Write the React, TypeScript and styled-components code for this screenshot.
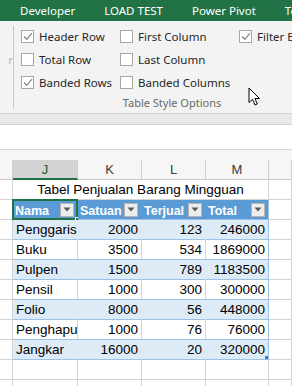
import React from "react";
import styled, { createGlobalStyle } from "styled-components";

const GlobalStyle = createGlobalStyle`
  html, body { margin: 0; padding: 0; background: #ffffff; }
  * { box-sizing: border-box; }
`;

const Page = styled.div`
  position: relative;
  width: 292px;
  height: 386px;
  overflow: hidden;
  background: #ffffff;
`;

const TabBar = styled.div`
  height: 21px;
  background: #217346;
  display: flex;
  align-items: center;
  gap: 29px;
  padding-left: 20px;
  white-space: nowrap;
`;

const Tab = styled.span`
  color: #ffffff;
  font-family: "Noto Sans", "Open Sans", sans-serif;
  font-size: 11.5px;
  line-height: 21px;
  flex: none;
`;

const Ribbon = styled.div`
  height: 93px;
  background: #f3f3f3;
  border-bottom: 1px solid #d5d5d5;
  display: flex;
  white-space: nowrap;
`;

const Stub = styled.div`
  width: 13px;
  flex: none;
  display: flex;
  justify-content: flex-end;
  padding-top: 31px;
  overflow: hidden;
  color: #b4b4b4;
  font-family: "Noto Sans", sans-serif;
  font-size: 11.5px;
`;

const Separator = styled.div`
  width: 1px;
  flex: none;
  background: #c6c6c6;
  margin: 5px 0 4px;
`;

const Group = styled.div`
  width: 316px;
  flex: none;
  display: flex;
  flex-direction: column;
  padding-top: 4px;
`;

const OptionGrid = styled.div`
  display: grid;
  grid-template-columns: 99px 119px auto;
  grid-auto-rows: 23px;
  padding-left: 7px;
`;

const Option = styled.label`
  display: flex;
  align-items: center;
  gap: 5px;
  font-family: "Noto Sans", "Open Sans", sans-serif;
  font-size: 11.5px;
  color: #262626;
`;

const Box = styled.span`
  width: 13px;
  height: 13px;
  border: 1px solid #a6a6a6;
  background: #ffffff;
  display: flex;
  align-items: center;
  justify-content: center;
  flex: none;
`;

const GroupLabel = styled.div`
  text-align: center;
  font-family: "Noto Sans", "Open Sans", sans-serif;
  font-size: 11px;
  color: #6a6a6a;
  margin-top: 1px;
`;

const NameBand = styled.div`
  height: 11px;
  background: #e9e9e9;
  border-bottom: 1px solid #d4d4d4;
`;

const FormulaBar = styled.div`
  height: 25px;
  background: #ffffff;
  border-bottom: 1px solid #d4d4d4;
`;

const HeaderGap = styled.div`
  height: 10px;
  background: #f6f6f6;
`;

const COLS = "13px 65px 64px 64px 63px 23px";

const ColHeaderRow = styled.div`
  display: grid;
  grid-template-columns: ${COLS};
  height: 20px;
  background: #f6f6f6;
`;

const ColHeader = styled.div<{ $active?: boolean }>`
  display: flex;
  align-items: center;
  justify-content: center;
  font-family: "Liberation Sans", "Open Sans", sans-serif;
  font-size: 13px;
  color: ${(p) => (p.$active ? "#1e5c38" : "#3a3a3a")};
  background: ${(p) => (p.$active ? "#d3d3d3" : "transparent")};
  border-right: 1px solid #d0d0d0;
  border-bottom: ${(p) => (p.$active ? "2px solid #217346" : "1px solid #c8c8c8")};
`;

const Row = styled.div`
  display: grid;
  grid-template-columns: ${COLS};
  height: 20px;
`;

type Band = "blue" | "white" | "none";

const Cell = styled.div<{ $band?: Band; $right?: boolean; $span?: number; $edge?: boolean }>`
  position: relative;
  grid-column: span ${(p) => p.$span ?? 1};
  display: flex;
  align-items: flex-end;
  justify-content: ${(p) => (p.$right ? "flex-end" : p.$span ? "center" : "flex-start")};
  padding: 0 3px 1px 3px;
  font-family: "Liberation Sans", "Open Sans", sans-serif;
  font-size: 13.5px;
  line-height: 17px;
  color: #000000;
  white-space: nowrap;
  overflow: hidden;
  background: ${(p) => (p.$band === "blue" ? "#ddebf7" : "#ffffff")};
  border-bottom: 1px solid ${(p) => (p.$band && p.$band !== "none" ? "#9bc2e6" : "#d4d4d4")};
  border-right: 1px solid
    ${(p) => (p.$edge ? "#9bc2e6" : p.$band === "blue" ? "#ddebf7" : "#d4d4d4")};
`;

const HeadCell = styled.div<{ $edge?: boolean }>`
  position: relative;
  display: flex;
  align-items: center;
  justify-content: space-between;
  padding: 0 3px 0 2px;
  background: #5b9bd5;
  color: #ffffff;
  font-family: "Liberation Sans", "Open Sans", sans-serif;
  font-weight: bold;
  font-size: 12.5px;
  white-space: nowrap;
  border-bottom: 1px solid #9bc2e6;
  border-right: 1px solid ${(p) => (p.$edge ? "#9bc2e6" : "#5b9bd5")};
`;

const HeadText = styled.span`
  padding-top: 2px;
`;

const Drop = styled.span`
  width: 14px;
  height: 14px;
  flex: none;
  background: #ededed;
  border: 1px solid #b5b5b5;
  display: flex;
  align-items: center;
  justify-content: center;
`;

const Selection = styled.div`
  position: absolute;
  left: -1px;
  top: -1px;
  right: -1px;
  bottom: -1px;
  border: 2px solid #217346;
  pointer-events: none;
`;

const Handle = styled.div`
  position: absolute;
  right: -4px;
  bottom: -4px;
  width: 5px;
  height: 5px;
  background: #217346;
  border: 1px solid #ffffff;
`;

const Corner = styled.div`
  position: absolute;
  right: 0;
  bottom: 0;
  width: 3px;
  height: 3px;
  background: #4472c4;
`;

const Cursor = styled.svg`
  position: absolute;
  left: 248px;
  top: 87px;
`;

const Check = () => (
  <svg width="10" height="9" viewBox="0 0 10 9">
    <path d="M1 4.5 L3.8 7.3 L9 1.2" fill="none" stroke="#8a8a8a" strokeWidth="1.3" />
  </svg>
);

const Arrow = () => (
  <svg width="8" height="5" viewBox="0 0 8 5">
    <path d="M0.5 0.5 H7.5 L4 4.5 Z" fill="#595959" />
  </svg>
);

const CheckOption = ({ label, checked }: { label: string; checked?: boolean }) => (
  <Option>
    <Box>{checked && <Check />}</Box>
    {label}
  </Option>
);

const data: [string, number, number, number][] = [
  ["Penggaris", 2000, 123, 246000],
  ["Buku", 3500, 534, 1869000],
  ["Pulpen", 1500, 789, 1183500],
  ["Pensil", 1000, 300, 300000],
  ["Folio", 8000, 56, 448000],
  ["Penghapus", 1000, 76, 76000],
  ["Jangkar", 16000, 20, 320000],
];

export default function App() {
  return (
    <>
      <GlobalStyle />
      <Page>
        <TabBar>
          <Tab>Developer</Tab>
          <Tab>LOAD TEST</Tab>
          <Tab>Power Pivot</Tab>
          <Tab>Team</Tab>
        </TabBar>
        <Ribbon>
          <Stub>r</Stub>
          <Separator />
          <Group>
            <OptionGrid>
              <CheckOption label="Header Row" checked />
              <CheckOption label="First Column" />
              <CheckOption label="Filter Button" checked />
              <CheckOption label="Total Row" />
              <CheckOption label="Last Column" />
              <span />
              <CheckOption label="Banded Rows" checked />
              <CheckOption label="Banded Columns" />
              <span />
            </OptionGrid>
            <GroupLabel>Table Style Options</GroupLabel>
          </Group>
        </Ribbon>
        <NameBand />
        <FormulaBar />
        <HeaderGap />
        <ColHeaderRow>
          <ColHeader />
          <ColHeader $active>J</ColHeader>
          <ColHeader>K</ColHeader>
          <ColHeader>L</ColHeader>
          <ColHeader>M</ColHeader>
          <ColHeader />
        </ColHeaderRow>
        <Row>
          <Cell />
          <Cell $span={4} $band="none">Tabel Penjualan Barang Mingguan</Cell>
          <Cell />
        </Row>
        <Row>
          <Cell />
          <HeadCell>
            <HeadText>Nama</HeadText>
            <Drop><Arrow /></Drop>
            <Selection>
              <Handle />
            </Selection>
          </HeadCell>
          <HeadCell>
            <HeadText>Satuan</HeadText>
            <Drop><Arrow /></Drop>
          </HeadCell>
          <HeadCell>
            <HeadText>Terjual</HeadText>
            <Drop><Arrow /></Drop>
          </HeadCell>
          <HeadCell $edge>
            <HeadText>Total</HeadText>
            <Drop><Arrow /></Drop>
          </HeadCell>
          <Cell />
        </Row>
        {data.map(([name, unit, sold, total], i) => {
          const band: Band = i % 2 === 0 ? "blue" : "white";
          const last = i === data.length - 1;
          return (
            <Row key={name}>
              <Cell />
              <Cell $band={band}>{name}</Cell>
              <Cell $band={band} $right>{unit}</Cell>
              <Cell $band={band} $right>{sold}</Cell>
              <Cell $band={band} $right $edge>
                {total}
                {last && <Corner />}
              </Cell>
              <Cell />
            </Row>
          );
        })}
        <Row>
          <Cell />
          <Cell />
          <Cell />
          <Cell />
          <Cell />
          <Cell />
        </Row>
        <Row>
          <Cell />
          <Cell />
          <Cell />
          <Cell />
          <Cell />
          <Cell />
        </Row>
        <Cursor width="14" height="20" viewBox="0 0 14 20">
          <path
            d="M1 1 L1 15.5 L4.5 12.3 L7 18 L9.3 17 L6.9 11.5 L11.5 11.5 Z"
            fill="#ffffff"
            stroke="#000000"
            strokeWidth="1"
            strokeLinejoin="miter"
          />
        </Cursor>
      </Page>
    </>
  );
}
